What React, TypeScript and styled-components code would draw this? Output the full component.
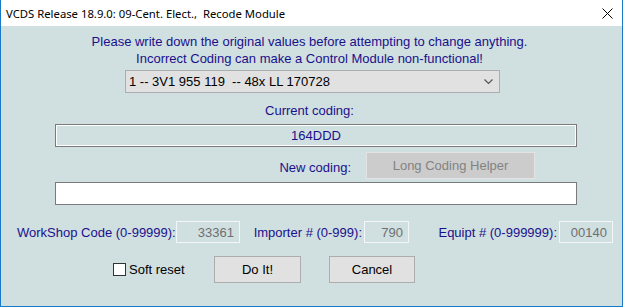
import React from "react";
import styled, { createGlobalStyle } from "styled-components";

const GlobalStyle = createGlobalStyle`
  html, body {
    margin: 0;
    padding: 0;
    background: #ffffff;
  }
`;

const Window = styled.div`
  box-sizing: border-box;
  width: 623px;
  height: 307px;
  border: 1px solid #1b79c9;
  border-top: none;
  display: flex;
  flex-direction: column;
  font-family: "Liberation Sans", Arial, sans-serif;
  font-size: 13px;
`;

const TitleBar = styled.div`
  height: 26px;
  flex: none;
  background: #ffffff;
  display: flex;
  align-items: center;
  justify-content: space-between;
  padding: 0 9px 0 5px;
  font-family: "Noto Sans", "Open Sans", sans-serif;
  font-size: 11.3px;
  color: #000000;
  white-space: pre;
`;

const Body = styled.div`
  flex: 1;
  background: #d0dfe0;
  display: flex;
  flex-direction: column;
  padding-top: 7px;
`;

const Notice = styled.div`
  text-align: center;
  color: #1a108c;
  line-height: 17px;
  padding-right: 4px;
`;

const Select = styled.div`
  box-sizing: border-box;
  margin: 3px 0 0 124px;
  width: 375px;
  height: 23px;
  background: #e1e1e1;
  border: 1px solid #adadad;
  display: flex;
  align-items: center;
  justify-content: space-between;
  padding: 0 6px 0 3px;
  color: #000000;
  white-space: pre;
`;

const Caption = styled.div`
  margin-top: 9px;
  line-height: 17px;
  text-align: center;
  color: #1a108c;
  padding-right: 4px;
`;

const CodingBox = styled.div<{ $readOnly?: boolean }>`
  box-sizing: border-box;
  margin-left: 54px;
  width: 522px;
  height: 23px;
  border: 1px solid #7a7a7a;
  box-shadow: ${(p) => (p.$readOnly ? "inset 1px -1px 0 #ffffff, inset -1px 1px 0 #ffffff" : "none")};
  background: ${(p) => (p.$readOnly ? "#d0dfe0" : "#ffffff")};
  display: flex;
  align-items: center;
  justify-content: center;
  color: #1a108c;
`;

const NewCodingRow = styled.div`
  margin-top: 5px;
  height: 27px;
  display: flex;
  align-items: center;
`;

const NewCodingLabel = styled.div`
  width: 350px;
  text-align: right;
  color: #1a108c;
  padding-top: 4px;
`;

const HelperButton = styled.div`
  box-sizing: border-box;
  margin-left: 15px;
  width: 169px;
  height: 27px;
  background: #cccccc;
  border: 1px solid #e3e3e3;
  color: #838383;
  display: flex;
  align-items: center;
  justify-content: center;
`;

const FieldsRow = styled.div`
  margin-top: 16px;
  height: 22px;
  display: flex;
  align-items: center;
  padding-left: 16px;
`;

const FieldLabel = styled.div<{ $w: number; $align?: string }>`
  width: ${(p) => p.$w}px;
  text-align: ${(p) => p.$align || "right"};
  padding-right: 2px;
  box-sizing: border-box;
  color: #1a108c;
  white-space: nowrap;
`;

const FieldBox = styled.div<{ $w: number }>`
  box-sizing: border-box;
  width: ${(p) => p.$w}px;
  height: 22px;
  border: 1px solid #f2f6f6;
  display: flex;
  align-items: center;
  justify-content: flex-end;
  padding-right: 5px;
  color: #6f6f6f;
`;

const ActionRow = styled.div`
  margin-top: 13px;
  height: 27px;
  display: flex;
  align-items: center;
  padding-left: 112px;
`;

const CheckLabel = styled.label`
  width: 101px;
  display: flex;
  align-items: center;
  color: #000000;
  gap: 3px;
`;

const CheckBox = styled.span`
  box-sizing: border-box;
  width: 13px;
  height: 13px;
  border: 1px solid #333333;
  background: #ffffff;
`;

const Button = styled.div<{ $w: number; $gap?: number }>`
  box-sizing: border-box;
  margin-left: ${(p) => p.$gap || 0}px;
  width: ${(p) => p.$w}px;
  height: 27px;
  background: #e1e1e1;
  border: 1px solid #adadad;
  display: flex;
  align-items: center;
  justify-content: center;
  color: #000000;
`;

const App: React.FC = () => {
  return (
    <>
      <GlobalStyle />
      <Window>
        <TitleBar>
          <span>VCDS Release 18.9.0: 09-Cent. Elect.,  Recode Module</span>
          <svg width="11" height="11" viewBox="0 0 11 11">
            <path d="M0.5 0.5 L10.5 10.5 M10.5 0.5 L0.5 10.5" stroke="#000" strokeWidth="1" />
          </svg>
        </TitleBar>
        <Body>
          <Notice>
            Please write down the original values before attempting to change anything.
            <br />
            Incorrect Coding can make a Control Module non-functional!
          </Notice>
          <Select>
            <span>1 -- 3V1 955 119  -- 48x LL 170728</span>
            <svg width="9" height="6" viewBox="0 0 9 6">
              <path d="M0.5 0.5 L4.5 4.5 L8.5 0.5" stroke="#555" strokeWidth="1.2" fill="none" />
            </svg>
          </Select>
          <Caption>Current coding:</Caption>
          <CodingBox $readOnly style={{ marginTop: 5 }}>164DDD</CodingBox>
          <NewCodingRow>
            <NewCodingLabel>New coding:</NewCodingLabel>
            <HelperButton>Long Coding Helper</HelperButton>
          </NewCodingRow>
          <CodingBox style={{ marginTop: 3 }} />
          <FieldsRow>
            <FieldLabel $w={159} $align="left">WorkShop Code (0-99999):</FieldLabel>
            <FieldBox $w={64}>33361</FieldBox>
            <FieldLabel $w={124}>Importer # (0-999):</FieldLabel>
            <FieldBox $w={45}>790</FieldBox>
            <FieldLabel $w={150}>Equipt # (0-999999):</FieldLabel>
            <FieldBox $w={54}>00140</FieldBox>
          </FieldsRow>
          <ActionRow>
            <CheckLabel>
              <CheckBox />
              Soft reset
            </CheckLabel>
            <Button $w={87}>Do It!</Button>
            <Button $w={86} $gap={28}>Cancel</Button>
          </ActionRow>
        </Body>
      </Window>
    </>
  );
};

export default App;
